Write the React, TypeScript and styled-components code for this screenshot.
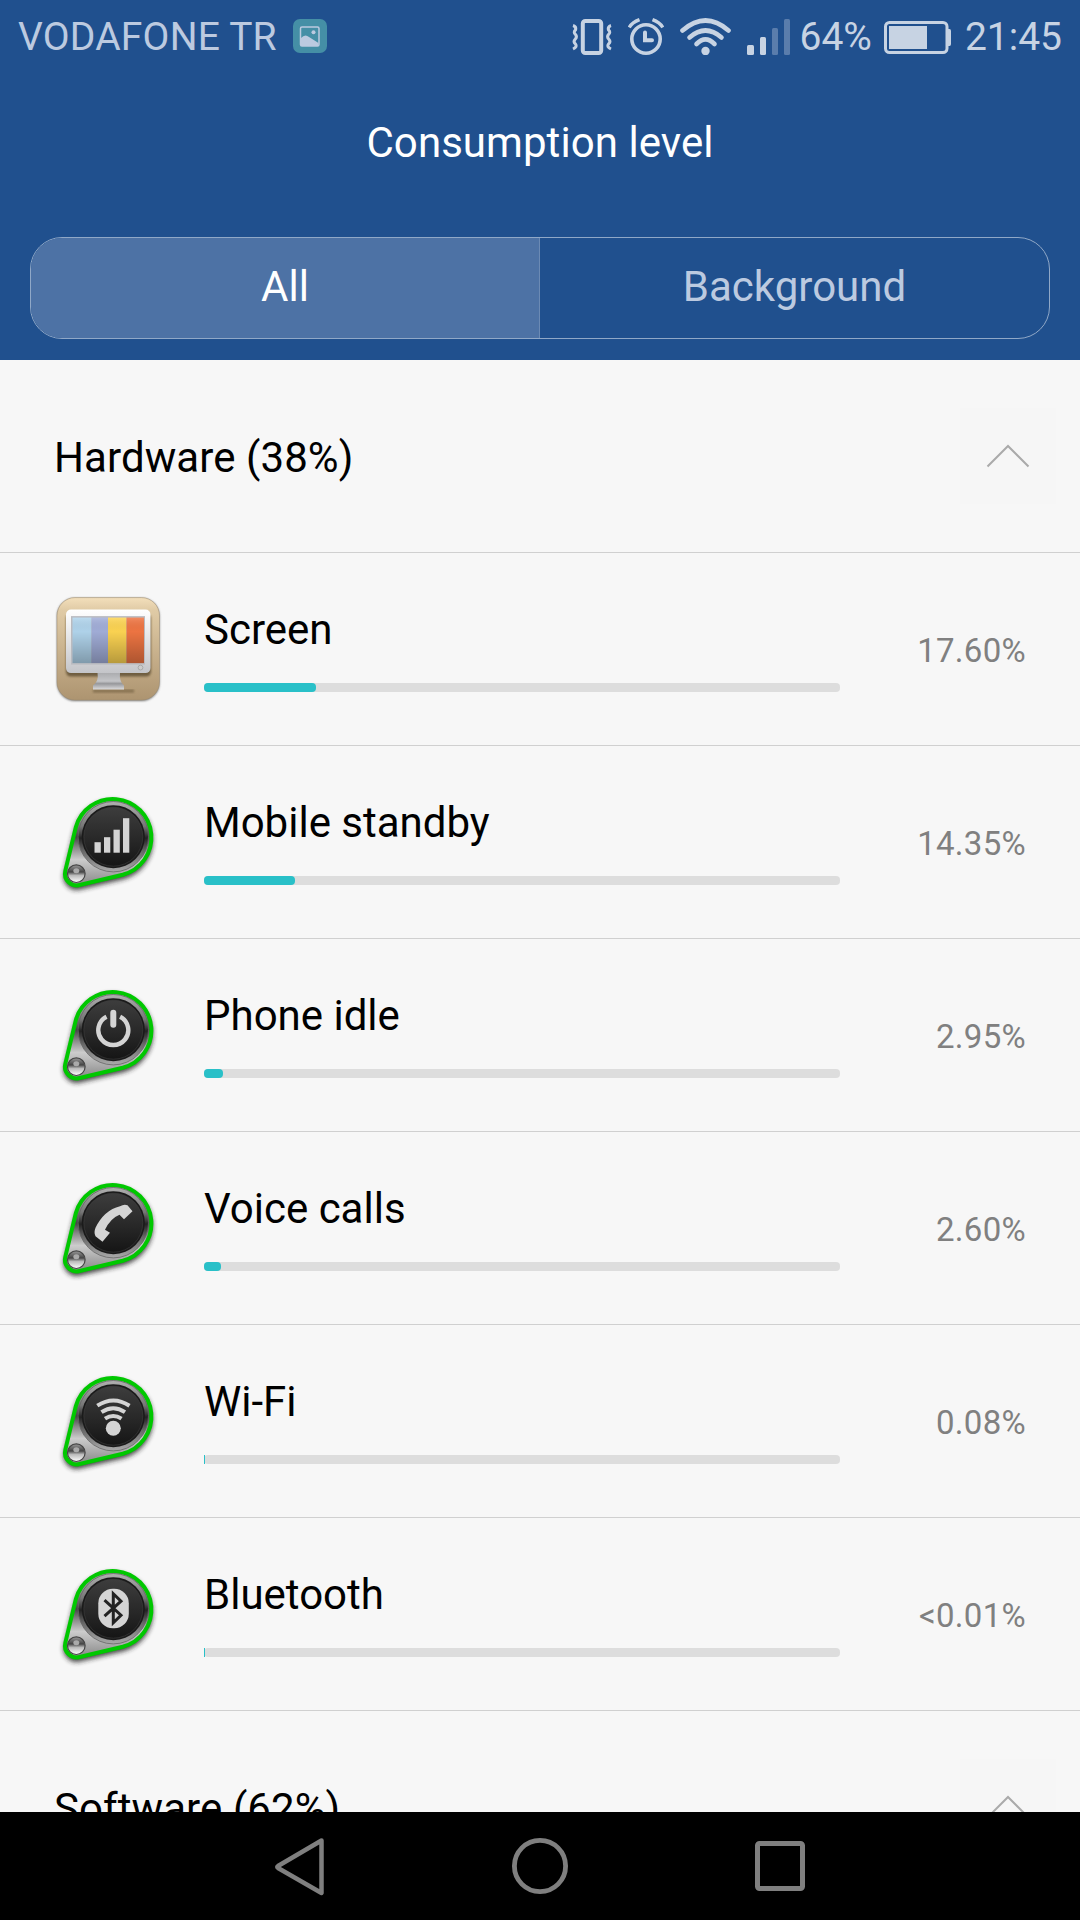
import * as React from 'react'
import styled, { createGlobalStyle } from 'styled-components'

const GlobalStyle = createGlobalStyle`
  body {
    margin: 0;
    background: #f7f7f7;
    font-family: Roboto, 'Noto Sans', sans-serif;
  }
`

const Screen = styled.div`
  display: flex;
  flex-direction: column;
  width: 1080px;
  height: 1920px;
  overflow: hidden;
  background: #f7f7f7;
`

const Header = styled.header`
  flex: none;
  height: 360px;
  box-sizing: border-box;
  background: #20508e;
  color: #fff;
`

const StatusBar = styled.div`
  display: flex;
  align-items: center;
  height: 72px;
  padding: 0 18px;
  color: #c7d3e3;
  svg {
    flex: none;
    display: block;
  }
`

const Carrier = styled.span`
  margin-right: 16px;
  padding-top: 1px;
  font-size: 39px;
  line-height: 46px;
  letter-spacing: 0.2px;
  color: #bccae0;
`

const StatusGroup = styled.div`
  display: flex;
  align-items: center;
  margin-left: auto;
`

const StatusIcons = styled.div`
  display: grid;
  grid-template-columns: 40px 36px 51px 43px;
  column-gap: 16px;
  align-items: end;
  margin-right: 9px;
`

const StatusText = styled.span`
  font-size: 39px;
  line-height: 46px;
  padding-top: 2px;
`

const Battery = styled.div`
  margin: 3px 14px 0 12px;
`

const Title = styled.h1`
  margin: 0;
  padding-top: 46px;
  font-size: 42px;
  line-height: 50px;
  font-weight: 400;
  letter-spacing: 0.06px;
  text-align: center;
`

const Tabs = styled.div`
  display: grid;
  grid-template-columns: 508px 1fr;
  height: 100px;
  margin: 69px 30px 0;
  border: 1px solid #90a8c7;
  border-radius: 32px;
  overflow: hidden;
`

const Tab = styled.div<{ $active?: boolean }>`
  font-size: 42px;
  line-height: 98px;
  text-align: center;
  color: ${p => (p.$active ? '#fff' : '#bccae0')};
  background: ${p => (p.$active ? '#4d72a5' : 'transparent')};
  & + & {
    border-left: 1px solid #6b8ab4;
  }
`

const List = styled.main`
  flex: 1;
  min-height: 0;
  overflow: hidden;
`

const Section = styled.div`
  display: flex;
  align-items: center;
  justify-content: space-between;
  height: 192px;
  padding: 0 24px 0 54px;
  border-bottom: 1px solid #d0d0d0;
`

const SectionTitle = styled.h2`
  margin: 0;
  padding-top: 4px;
  font-size: 42px;
  line-height: 50px;
  font-weight: 400;
  letter-spacing: 0.08px;
  color: #000;
`

const Toggle = styled.div`
  width: 96px;
  height: 96px;
  background: #f6f6f6;
  svg {
    display: block;
  }
`

const Row = styled.div`
  display: flex;
  align-items: center;
  height: 192px;
  padding: 0 54px 0 50px;
  border-bottom: 1px solid #d0d0d0;
  svg {
    flex: none;
    display: block;
  }
`

const Info = styled.div`
  width: 636px;
  height: 140px;
  padding-top: 52px;
  margin-left: 34px;
`

const Name = styled.div`
  font-size: 42px;
  line-height: 50px;
  color: #000;
`

const Track = styled.div`
  height: 9px;
  margin-top: 28px;
  border-radius: 4px;
  background: #ddd;
`

const Fill = styled.div<{ $sliver: boolean }>`
  height: 9px;
  min-width: 1px;
  border-radius: ${p => (p.$sliver ? 0 : '4px')};
  background: #29c0c8;
`

const Percent = styled.div`
  margin-left: auto;
  padding-top: 3px;
  font-size: 33px;
  line-height: 39px;
  letter-spacing: 0.3px;
  color: #808080;
`

const NavBar = styled.nav`
  flex: none;
  display: flex;
  align-items: center;
  justify-content: center;
  gap: 180px;
  height: 108px;
  background: #000;
`

const GalleryIcon = () => (
  <svg width="34" height="34" viewBox="0 0 34 34">
    <rect width="34" height="34" rx="7" fill="#458fa6" />
    <rect x="7.5" y="8" width="18.5" height="19" rx="1.5" fill="none" stroke="#bccae0" strokeWidth="1.5" />
    <circle cx="20.5" cy="13.3" r="2" fill="#bccae0" />
    <path d="M8 19 Q12 14.5 16 18 L25.5 24 V27 H8 Z" fill="#bccae0" />
  </svg>
)

const VibrateIcon = () => (
  <svg width="40" height="36" viewBox="0 0 40 36" fill="none" stroke="currentColor">
    <rect x="10.8" y="2" width="18.4" height="32" rx="2.5" strokeWidth="4" />
    <path d="M1 6.5 Q4.5 7.5 3.5 11 Q1 13 3.5 15.5 Q5.5 18 3 20.5 Q1 23 3.5 25 Q5.5 28 1 30" strokeWidth="3" />
    <path d="M39 6.5 Q35.5 7.5 36.5 11 Q39 13 36.5 15.5 Q34.5 18 37 20.5 Q39 23 36.5 25 Q34.5 28 39 30" strokeWidth="3" />
  </svg>
)

const AlarmIcon = () => (
  <svg width="36" height="37" viewBox="0 0 36 37" fill="none" stroke="currentColor">
    <circle cx="18" cy="21" r="14.2" strokeWidth="3.6" />
    <path d="M17 14.5 V22.2 H24" strokeWidth="4" strokeLinecap="round" />
    <path d="M1.2 9.5 Q4 4.5 11.5 1.7 M34.8 9.5 Q32 4.5 24.5 1.7" strokeWidth="3.4" />
  </svg>
)

const WifiIcon = () => (
  <svg width="51" height="37" viewBox="0 0 51 37" fill="none" stroke="currentColor" strokeLinecap="round">
    <path d="M2.5 12.5 Q25.5 -7.5 48.5 12.5" strokeWidth="4.6" />
    <path d="M9.5 19.5 Q25.5 5.5 41.5 19.5" strokeWidth="4.6" />
    <path d="M16.5 26 Q25.5 17 34.5 26" strokeWidth="4.6" />
    <circle cx="25.5" cy="33" r="4.2" fill="currentColor" stroke="none" />
  </svg>
)

const SignalIcon = () => (
  <svg width="43" height="36" viewBox="0 0 43 36" fill="currentColor">
    <rect x="0" y="26" width="7" height="10" rx="1.5" />
    <rect x="13" y="18" width="6" height="18" rx="1.5" />
    <rect x="25" y="9" width="6" height="27" rx="1.5" fill="#5a7dac" />
    <rect x="37" y="0" width="6" height="36" rx="1.5" fill="#5a7dac" />
  </svg>
)

const BatteryIcon = () => (
  <svg width="67" height="33" viewBox="0 0 67 33">
    <rect x="1.5" y="1.5" width="61.5" height="30" rx="4" fill="none" stroke="currentColor" strokeWidth="3" />
    <rect x="5" y="5" width="38" height="23" fill="currentColor" />
    <path d="M64 8 h1.5 q1.5 0 1.5 2 v13 q0 2 -1.5 2 h-1.5 z" fill="currentColor" />
  </svg>
)

const Chevron = () => (
  <svg width="96" height="96" viewBox="0 0 96 96">
    <path d="M27.5 58.5 L48 38 L68.5 58.5" fill="none" stroke="#aaa" strokeWidth="2" />
  </svg>
)

const ScreenIcon = () => (
  <svg width="120" height="120" viewBox="0 -0.6 120 120">
    <defs>
      <linearGradient id="tan" x2="0" y2="1">
        <stop offset="0" stopColor="#f3dfbb" />
        <stop offset="0.12" stopColor="#e0cba6" />
        <stop offset="1" stopColor="#ad9470" />
      </linearGradient>
      <linearGradient id="frame" x2="0" y2="1">
        <stop offset="0" stopColor="#fff" />
        <stop offset="1" stopColor="#c4c5c9" />
      </linearGradient>
      <linearGradient id="stand" x2="0" y2="1">
        <stop offset="0" stopColor="#aaabae" />
        <stop offset="0.5" stopColor="#c4c5c8" />
        <stop offset="0.65" stopColor="#97989b" />
        <stop offset="1" stopColor="#dcdcde" />
      </linearGradient>
      <linearGradient id="shade" x2="0" y2="1">
        <stop offset="0" stopColor="#fff" stopOpacity="0.15" />
        <stop offset="0.3" stopColor="#000" stopOpacity="0.02" />
        <stop offset="1" stopColor="#000" stopOpacity="0.28" />
      </linearGradient>
      <filter id="soft" x="-20%" y="-20%" width="140%" height="140%">
        <feGaussianBlur stdDeviation="1.3" />
      </filter>
    </defs>
    <rect x="7" y="8.5" width="102.5" height="103" rx="18" fill="#777" filter="url(#soft)" />
    <rect x="7" y="8" width="102.5" height="102.5" rx="18" fill="url(#tan)" stroke="#9c8a6e" strokeOpacity="0.5" />
    <rect x="16" y="24" width="85" height="63" rx="5" fill="#56462c" opacity="0.75" filter="url(#soft)" />
    <path d="M43 100 h41 v3 h-41 z" fill="#56462c" opacity="0.5" filter="url(#soft)" />
    <path d="M47.5 83 h22.500 q-1 9 4 13 v4 h-31 v-4 q6 -4 4.500 -13 z" fill="url(#stand)" />
    <rect x="16" y="20" width="84.5" height="63.5" rx="5" fill="url(#frame)" />
    <rect x="21" y="26.5" width="74" height="48.5" fill="#babbc0" />
    <rect x="22.5" y="28" width="19" height="45.5" fill="#b2d6ee" />
    <rect x="41.5" y="28" width="16.5" height="45.5" fill="#a3afda" />
    <rect x="58" y="28" width="18.5" height="45.5" fill="#ffd653" />
    <rect x="76.5" y="28" width="17.5" height="45.5" fill="#f17643" />
    <rect x="22.5" y="28" width="71.5" height="45.5" fill="url(#shade)" />
    <circle cx="90.5" cy="78" r="2.4" fill="#ccc" stroke="#aaa" />
  </svg>
)

const tagPath =
  'M25.7 45.9 A38.5 38.5 0 1 1 72.8 93 L29.6 103.3 A11.7 11.7 0 0 1 15.3 89.2 Z'

// Steel key tag with a green rim, the glyph goes on the dark disc
const Badge = ({ children }: { children: React.ReactNode }) => (
  <svg width="120" height="120" viewBox="0 0.3 120 120">
    <defs>
      <linearGradient id="steel" x2="0" y2="1">
        <stop offset="0" stopColor="#a8a8a8" />
        <stop offset="0.25" stopColor="#8a8a8a" />
        <stop offset="0.44" stopColor="#444" />
        <stop offset="0.56" stopColor="#888" />
        <stop offset="0.7" stopColor="#ccc" />
        <stop offset="1" stopColor="#888" />
      </linearGradient>
      <linearGradient id="ring" x2="0" y2="1">
        <stop offset="0" stopColor="#b0b0b0" />
        <stop offset="0.35" stopColor="#777" />
        <stop offset="0.52" stopColor="#222" />
        <stop offset="0.7" stopColor="#666" />
        <stop offset="1" stopColor="#aaa" />
      </linearGradient>
      <linearGradient id="disc" x2="0" y2="1">
        <stop offset="0" stopColor="#3d3d3d" />
        <stop offset="0.55" stopColor="#282828" />
        <stop offset="1" stopColor="#151515" />
      </linearGradient>
      <linearGradient id="rivet" x2="0" y2="1">
        <stop offset="0" stopColor="#999" />
        <stop offset="0.4" stopColor="#444" />
        <stop offset="0.6" stopColor="#bbb" />
        <stop offset="1" stopColor="#fff" />
      </linearGradient>
      <filter id="drop" x="-20%" y="-20%" width="140%" height="140%">
        <feGaussianBlur stdDeviation="2.8" />
      </filter>
    </defs>
    <path
      d={tagPath}
      transform="translate(0 3)"
      fill="#222"
      stroke="#222"
      strokeWidth="3"
      opacity="0.85"
      filter="url(#drop)"
    />
    <path d={tagPath} fill="url(#steel)" stroke="#00c800" strokeWidth="4" strokeLinejoin="round" />
    <circle cx="63.3" cy="55" r="35.2" fill="url(#ring)" stroke="#666" strokeWidth="0.8" />
    <circle cx="63.3" cy="55" r="31.5" fill="#1a1a1a" />
    <circle cx="63.3" cy="55" r="29.5" fill="url(#disc)" stroke="#444" strokeWidth="0.5" />
    <circle cx="26.3" cy="92" r="8.8" fill="url(#rivet)" stroke="#444" strokeWidth="1.2" />
    <ellipse cx="26.3" cy="89" rx="3" ry="2.5" fill="#aaa" />
    {children}
  </svg>
)

const glyph = '#d4d4d4'

const MobileGlyph = () => (
  <g fill={glyph}>
    <rect x="44.5" y="60.5" width="6.3" height="10.5" />
    <rect x="54" y="55.5" width="6.3" height="15.5" />
    <rect x="63.5" y="48" width="6.3" height="23" />
    <rect x="73" y="36.5" width="6.3" height="34.5" />
  </g>
)

const PowerGlyph = () => (
  <g fill="none" stroke={glyph}>
    <path d="M56.5 42 A15 15 0 1 0 70.1 42" strokeWidth="4.4" />
    <path d="M63.3 38 V50" strokeWidth="6" strokeLinecap="round" />
  </g>
)

const PhoneGlyph = () => (
  <path
    d="M70 38.5 Q74 36 77.5 37.5 L82.5 43.5 L74 51.5 L69.5 47 Q60.5 50.5 55 62 L60 65 L52.5 74 L45.5 68.5 Q43.5 65 45.5 60 Q54 42.5 70 38.5 Z"
    fill={glyph}
  />
)

const WifiGlyph = () => (
  <g fill="none" stroke={glyph}>
    <path d="M47.3 45 Q63.3 34.5 79.5 45" strokeWidth="4" />
    <path d="M51.5 51.5 Q63.3 43.5 75 51.5" strokeWidth="4" />
    <path d="M55 58 Q63.3 52.5 71.5 58" strokeWidth="4" />
    <circle cx="63.3" cy="67.5" r="7.5" fill={glyph} stroke="none" />
  </g>
)

const BluetoothGlyph = () => (
  <g>
    <rect x="48.3" y="35" width="30.5" height="39.5" rx="14.5" fill={glyph} />
    <path
      d="M54.5 46.5 L71 61.5 L63.3 69 V40 L71 47.5 L54.5 62.5"
      fill="none"
      stroke="#222"
      strokeWidth="3"
    />
  </g>
)

const items = [
  { name: 'Screen', percent: '17.60%', value: 17.6, icon: <ScreenIcon /> },
  { name: 'Mobile standby', percent: '14.35%', value: 14.35, icon: <Badge><MobileGlyph /></Badge> },
  { name: 'Phone idle', percent: '2.95%', value: 2.95, icon: <Badge><PowerGlyph /></Badge> },
  { name: 'Voice calls', percent: '2.60%', value: 2.6, icon: <Badge><PhoneGlyph /></Badge> },
  { name: 'Wi-Fi', percent: '0.08%', value: 0.08, icon: <Badge><WifiGlyph /></Badge> },
  { name: 'Bluetooth', percent: '<0.01%', value: 0.01, icon: <Badge><BluetoothGlyph /></Badge> },
]

const SectionHeader = ({ title }: { title: string }) => (
  <Section>
    <SectionTitle>{title}</SectionTitle>
    <Toggle>
      <Chevron />
    </Toggle>
  </Section>
)

const App = () => {
  return (
    <Screen>
      <GlobalStyle />
      <Header>
        <StatusBar>
          <Carrier>VODAFONE TR</Carrier>
          <GalleryIcon />
          <StatusGroup>
            <StatusIcons>
              <VibrateIcon />
              <AlarmIcon />
              <WifiIcon />
              <SignalIcon />
            </StatusIcons>
            <StatusText>64%</StatusText>
            <Battery>
              <BatteryIcon />
            </Battery>
            <StatusText>21:45</StatusText>
          </StatusGroup>
        </StatusBar>
        <Title>Consumption level</Title>
        <Tabs>
          <Tab $active>All</Tab>
          <Tab>Background</Tab>
        </Tabs>
      </Header>
      <List>
        <SectionHeader title="Hardware (38%)" />
        {items.map(item => (
          <Row key={item.name}>
            {item.icon}
            <Info>
              <Name>{item.name}</Name>
              <Track>
                <Fill $sliver={item.value < 1} style={{ width: `${item.value}%` }} />
              </Track>
            </Info>
            <Percent>{item.percent}</Percent>
          </Row>
        ))}
        <SectionHeader title="Software (62%)" />
      </List>
      <NavBar>
        <svg width="60" height="60" viewBox="0 0 60 60" fill="none" stroke="#7f7f7f" strokeWidth="4.5">
          <path d="M51.5 4.5 L8 30 Q6.5 31 8 32 L51.5 57 Z" strokeLinejoin="round" />
        </svg>
        <svg width="60" height="60" viewBox="0 0 60 60" fill="none" stroke="#7f7f7f" strokeWidth="4.8">
          <circle cx="30" cy="30" r="25.6" />
        </svg>
        <svg width="60" height="60" viewBox="0 0 60 60" fill="none" stroke="#7f7f7f" strokeWidth="5">
          <rect x="7.5" y="7.5" width="45" height="45" rx="2" />
        </svg>
      </NavBar>
    </Screen>
  )
}

export default App
